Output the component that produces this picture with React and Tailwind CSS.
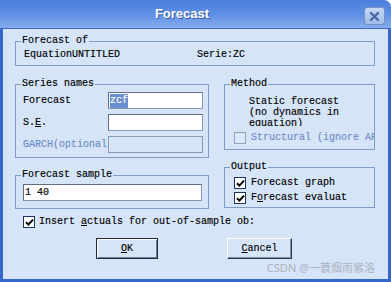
import React from "react";

const Check = ({ checked, disabled }) => (
  <div
    className={
      disabled
        ? "w-[12px] h-[12px] border border-[#8ea3c6] bg-[#dde8f8] shrink-0"
        : "w-[12px] h-[12px] border border-[#1d3461] bg-white shrink-0 flex items-center justify-center"
    }
  >
    {checked && (
      <svg width="9" height="9" viewBox="0 0 9 9">
        <path d="M1 4.2 L3.4 6.6 L8 1.6" fill="none" stroke="#000" strokeWidth="2" />
      </svg>
    )}
  </div>
);

const Field = ({ children, className = "" }) => (
  <div className={"h-[17px] bg-white border border-[#8796b0] border-t-[#5e6c84] border-l-[#5e6c84] flex items-center " + className}>
    {children}
  </div>
);

export default function App() {
  return (
    <div className="w-[391px] h-[282px] relative overflow-hidden bg-white flex flex-col font-['Liberation_Mono',monospace] text-[10px] leading-[12px] text-black [-webkit-text-stroke:0.15px]">
      {/* title bar */}
      <div className="h-[29px] shrink-0 flex items-center rounded-tr-[7px] bg-gradient-to-b from-[#4a7fdc] via-[#5e8fe4] to-[#86aced] border-b border-[#3d6ac6]">
        <div className="flex-1 text-center text-white font-['Liberation_Sans',sans-serif] font-bold text-[13px] [-webkit-text-stroke:0px] [text-shadow:1px_1px_0_#3a5fa8]">
          Forecast
        </div>
        <div className="w-[21px] h-[18px] mr-[6px] mt-[4px] rounded-[3px] border border-[#7890c2] bg-gradient-to-b from-[#c6d7f4] to-[#a2bcea] flex items-center justify-center">
          <svg width="11" height="11" viewBox="0 0 11 11">
            <path d="M2 2 L9 9 M9 2 L2 9" stroke="#4a67a4" strokeWidth="2.4" strokeLinecap="round" />
          </svg>
        </div>
      </div>

      {/* body */}
      <div className="flex-1 bg-[#d6e4f7] border-x-[3px] border-b-[3px] border-[#3466cc] pl-[12px] pt-[6px]">
        <fieldset className="w-[360px] min-w-0 border border-[#7f9cc8]">
          <legend className="ml-[5px] px-[1px]">Forecast of</legend>
          <div className="flex pl-[8px] pt-[2px] pb-[4px] whitespace-nowrap">
            <span className="w-[173px]">EquationUNTITLED</span>
            <span>Serie:ZC</span>
          </div>
        </fieldset>

        <div className="flex gap-[15px] mt-[12px]">
          {/* left column */}
          <div className="w-[194px] flex flex-col">
            <fieldset className="min-w-0 border border-[#7f9cc8]">
              <legend className="ml-[5px] px-[1px]">Series names</legend>
              <div className="grid grid-cols-[85px_95px] gap-y-[5px] items-center pl-[7px] pt-[2px] pb-[4px]">
                <span>Forecast</span>
                <Field>
                  <span className="ml-px bg-[#6a8fd0] text-white leading-[14px]">zcf</span>
                </Field>
                <span>
                  S.<span className="underline">E</span>.
                </span>
                <Field />
                <span className="text-[#6e8bc4] whitespace-nowrap overflow-hidden">GARCH(optional)</span>
                <div className="h-[17px] bg-[#d6e4f7] border border-[#8a9ab5]" />
              </div>
            </fieldset>

            <fieldset className="mt-[11px] min-w-0 border border-[#7f9cc8]">
              <legend className="ml-[5px] px-[1px]">Forecast sample</legend>
              <div className="pl-[7px] pt-[3px] pb-[7px]">
                <Field className="w-[179px] h-[16px] pl-[1px]">1 40</Field>
              </div>
            </fieldset>
          </div>

          {/* right column */}
          <div className="w-[151px] flex flex-col">
            <fieldset className="min-w-0 border border-[#7f9cc8]">
              <legend className="ml-[5px] px-[1px]">Method</legend>
              <div className="pt-[6px] pb-[5px]">
                <div className="ml-[24px] w-[96px] h-[30px] overflow-hidden leading-[11px]">
                  Static forecast (no dynamics in equation)
                </div>
                <div className="flex items-center gap-[5px] mt-[6px] pl-[9px] pr-[3px] overflow-hidden whitespace-nowrap">
                  <Check disabled />
                  <span className="text-[#6e8bc4]">Structural (ignore ARMA)</span>
                </div>
              </div>
            </fieldset>

            <fieldset className="mt-[11px] min-w-0 border border-[#7f9cc8]">
              <legend className="ml-[5px] px-[1px]">Output</legend>
              <div className="flex flex-col gap-[3px] pt-[4px] pb-[3px] pl-[9px] whitespace-nowrap overflow-hidden">
                <div className="flex items-center gap-[5px]">
                  <Check checked />
                  <span>
                    Forecast <span className="underline">g</span>raph
                  </span>
                </div>
                <div className="flex items-center gap-[5px]">
                  <Check checked />
                  <span>
                    F<span className="underline">o</span>recast evaluat
                  </span>
                </div>
              </div>
            </fieldset>
          </div>
        </div>

        <div className="flex items-center gap-[4px] mt-[7px] ml-[8px] whitespace-nowrap">
          <Check checked />
          <span>
            Insert <span className="underline">a</span>ctuals for out-of-sample ob:
          </span>
        </div>

        <div className="flex mt-[10px] ml-[81px] gap-[69px]">
          <button className="w-[62px] h-[21px] border border-[#1f2a3c] shadow-[inset_1px_1px_0_#ffffff,inset_-1px_-1px_0_#6d7d96] bg-[#d6e4f7] text-[10px] leading-[12px]">
            <span className="underline">O</span>K
          </button>
          <button className="w-[65px] h-[21px] border border-t-white border-l-white border-r-[#2a3548] border-b-[#2a3548] shadow-[inset_-1px_-1px_0_#8494ae] bg-[#d6e4f7] text-[10px] leading-[12px]">
            <span className="underline">C</span>ancel
          </button>
        </div>
      </div>

      <div className="absolute right-[16px] bottom-[8px] text-[11px] leading-[12px] text-[#aab4c2] [-webkit-text-stroke:0px] font-['Noto_Sans','Noto_Sans_CJK_SC',sans-serif]">
        CSDN @一蓑烟雨紫洛
      </div>
    </div>
  );
}
